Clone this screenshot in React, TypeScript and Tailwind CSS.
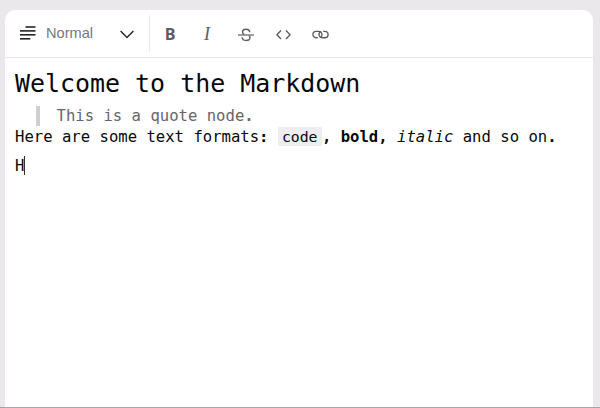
import React from 'react';

function ParagraphIcon() {
  return (
    <svg width="16" height="14" viewBox="0 0 16 14" fill="#252529" className="-mt-px shrink-0">
      <rect x="5.5" y="0.2" width="10" height="1.6" />
      <rect x="0" y="4.1" width="15.5" height="1.6" />
      <rect x="0" y="8" width="15.5" height="1.6" />
      <rect x="0" y="12" width="10.3" height="1.6" />
    </svg>
  );
}

function StrikeIcon() {
  return (
    <svg width="16" height="14" viewBox="0 0 16 14" fill="none" stroke="#5c5c61" strokeWidth="1.4">
      <path d="M0 7H16" strokeWidth="1.2" />
      <path d="M11.8 4.2C11.6 2.3 10.2 1.3 8.1 1.3C6 1.3 4.5 2.3 4.5 4C4.5 5.1 5.2 5.8 6.2 6.3" />
      <path d="M4.1 9.3C4.3 11.4 5.9 12.5 8.1 12.5C10.5 12.5 12 11.4 12 9.6C12 8.7 11.6 8 10.8 7.5" />
    </svg>
  );
}

function CodeIcon() {
  return (
    <svg width="15" height="10" viewBox="0 0 15 10" fill="none" stroke="#5c5c61" strokeWidth="1.4">
      <path d="M5 0.5L0.9 4.8L5 9.1M10 0.5L14.1 4.8L10 9.1" />
    </svg>
  );
}

function LinkIcon() {
  return (
    <svg width="17" height="9" viewBox="0 0 17 9" fill="none" stroke="#5c5c61" strokeWidth="1.35" strokeLinecap="round">
      <path d="M5.3 7.7H4.1A3.2 3.2 0 0 1 4.1 1.3H7.2A3.2 3.2 0 0 1 8.3 7.3" />
      <path d="M11.7 1.3H12.9A3.2 3.2 0 0 1 12.9 7.7H9.8A3.2 3.2 0 0 1 8.7 1.7" />
    </svg>
  );
}

function Toolbar() {
  return (
    <div className="flex h-[48px] shrink-0 border-b border-[#e8e8eb] pt-[5px]">
      <div className="flex h-[37px] w-[145px] items-center border-r border-[#e8e8eb] pl-[15px]">
        <ParagraphIcon />
        <span className="-mt-[2px] ml-[10px] w-[74px] font-['Liberation_Sans',Arial,sans-serif] text-[14.6px] leading-5 text-[#77777c]">
          Normal
        </span>
        <svg width="14" height="9" viewBox="0 0 14 9" fill="none" stroke="#252529" strokeWidth="1.4" className="mt-[2px]">
          <path d="M0.6 1L7 7.5L13.4 1" />
        </svg>
      </div>
      <div className="flex h-[38px] items-center pt-[1px] text-[#5c5c61]">
        <button className="-mt-[2px] ml-[14px] w-[12px] font-['Open_Sans',sans-serif] text-[16px] leading-5 font-bold">B</button>
        <button className="-mt-px ml-[25px] w-[12px] font-['Liberation_Serif',serif] text-[18px] leading-5 italic">I</button>
        <button className="ml-[25px]"><StrikeIcon /></button>
        <button className="ml-[22px]"><CodeIcon /></button>
        <button className="ml-[21px]"><LinkIcon /></button>
      </div>
    </div>
  );
}

export default function App() {
  return (
    <div className="flex h-[408px] w-[600px] flex-col overflow-hidden border-b border-[#a5a5a7] bg-[#eae8eb] pt-[10px] pr-[7px] pl-[5px]">
      <div className="flex min-h-0 flex-1 flex-col rounded-t-[10px] bg-white">
        <Toolbar />
        <div className="px-[10px] pt-[9px] font-['DejaVu_Sans_Mono',monospace] text-[15.6px] leading-5 whitespace-pre text-[#08080a]">
          <h1 className="h-[39px] text-[24.95px] leading-[34px]">Welcome to the Markdown</h1>
          <blockquote className="ml-[21px] h-[20px] border-l-4 border-[#ceced4] pl-[16.5px] text-[#65656a]">
            This is a quote node<span className="font-bold">.</span>
          </blockquote>
          <p className="h-[30px] leading-[22px]">
            Here are some text formats<b>:</b> <code className="inline-block h-[19px] w-[44px] rounded-[1px] bg-[#eeedf2] px-1 font-['DejaVu_Sans_Mono',monospace] text-[14.8px] leading-[19px]">code</code>
            <b>, bold, </b><i>italic</i> and so on<b>.</b>
          </p>
          <p className="flex leading-5">
            <span className="w-[9px]">H</span>
            <span className="h-[19px] w-px bg-[#303034]" />
          </p>
        </div>
      </div>
    </div>
  );
}
